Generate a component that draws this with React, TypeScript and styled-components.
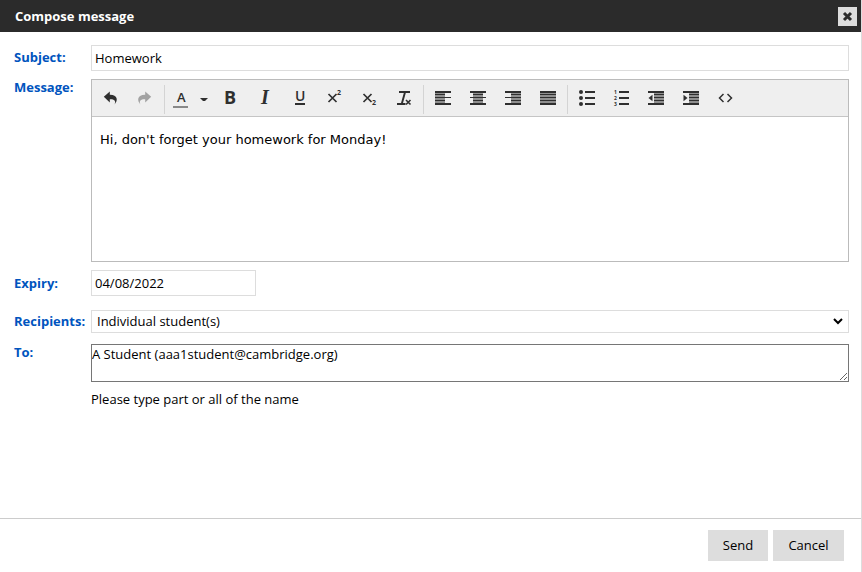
import React from "react";
import styled, { createGlobalStyle, css } from "styled-components";

const GlobalStyle = createGlobalStyle`
  *, *::before, *::after { box-sizing: border-box; }
  body {
    margin: 0;
    background: #fff;
    color: #000;
    font: 13px/18px "Open Sans", "Noto Sans", sans-serif;
  }
`;

const Dialog = styled.form`
  display: flex;
  flex-direction: column;
  min-height: 100vh;
  border-right: 1px solid #ddd;
`;

const Header = styled.header`
  display: flex;
  align-items: center;
  justify-content: space-between;
  height: 32px;
  padding: 0 4px 0 15px;
  background: #2b2b2b;
`;

const Title = styled.h1`
  margin: 0;
  color: #fff;
  font-size: 13px;
  font-weight: 700;
`;

const CloseButton = styled.button`
  display: grid;
  place-items: center;
  width: 19px;
  height: 19px;
  padding: 0;
  border: 0;
  background: #ddd;
`;

const Fields = styled.div`
  flex: 1;
  display: flex;
  flex-direction: column;
  padding: 13px 12px 0 14px;
`;

const Row = styled.div<{ $gap: number }>`
  display: grid;
  grid-template-columns: 77px minmax(0, 1fr);
  align-items: start;
  margin-bottom: ${(p) => p.$gap}px;
`;

const Label = styled.label<{ $top: number }>`
  padding-top: ${(p) => p.$top}px;
  color: #0054be;
  font-weight: 700;
  line-height: 16px;
  white-space: nowrap;
`;

const control = css`
  display: block;
  border: 1px solid #ddd;
  border-radius: 0;
  background: #fff;
  color: #000;
  font: inherit;
`;

const TextInput = styled.input<{ $width: string }>`
  ${control}
  width: ${(p) => p.$width};
  height: 26px;
  padding: 0 3px;
`;

const SelectWrap = styled.div`
  position: relative;
`;

const Select = styled.select`
  ${control}
  appearance: none;
  width: 100%;
  height: 23px;
  padding: 0 24px 2px 5px;
`;

const SelectArrow = styled.svg`
  position: absolute;
  right: 6px;
  top: 7px;
  pointer-events: none;
`;

const Recipients = styled.textarea`
  ${control}
  width: 100%;
  height: 38px;
  padding: 0;
  border-color: #767676;
  resize: vertical;
`;

const Hint = styled.p`
  margin: 8px 0 0;
`;

const Editor = styled.div`
  border: 1px solid #bbb;
`;

const Toolbar = styled.div`
  display: flex;
  height: 37px;
  padding: 5px 0 2px;
  border-bottom: 1px solid #c5c5c5;
  background: #efefef;
`;

const ToolGroup = styled.div<{ $width: number; $last?: boolean }>`
  display: flex;
  width: ${(p) => p.$width}px;
  padding: 0 2px;
  border-right: ${(p) => (p.$last ? 0 : "1px solid #d4d4d4")};
`;

const ToolButton = styled.button<{ $wide?: boolean }>`
  flex: ${(p) => (p.$wide ? "0 0 46px" : "1 1 0")};
  display: flex;
  align-items: center;
  justify-content: center;
  gap: 11px;
  min-width: 0;
  height: 26px;
  padding: 0;
  border: 0;
  background: none;
  color: #2f2f2f;

  &:disabled { color: #a2a2a2; }
`;

const Icon = styled.svg`
  display: block;
  flex: none;
  fill: currentColor;
  overflow: visible;
`;

const Message = styled.textarea`
  display: block;
  width: 100%;
  height: 144px;
  padding: 14px 8px;
  border: 0;
  background: #fff;
  color: #000;
  font: 13px/18px "DejaVu Sans", Verdana, sans-serif;
  resize: none;
`;

const Footer = styled.footer`
  display: flex;
  justify-content: flex-end;
  gap: 5px;
  padding: 11px 17px 11px;
  border-top: 1px solid #ccc;
`;

const ActionButton = styled.button<{ $minWidth: number }>`
  min-width: ${(p) => p.$minWidth}px;
  height: 31px;
  padding: 0 14px 2px;
  border: 0;
  background: #ddd;
  color: #000;
  font: inherit;
`;

type GlyphProps = { children: React.ReactNode; width?: number };
const Glyph = ({ children, width = 16 }: GlyphProps) => (
  <Icon width={width} height={16} viewBox={`0 0 ${width} 16`} aria-hidden="true">
    {children}
  </Icon>
);

const SANS = "Open Sans";
const SERIF = "Liberation Serif";

const rows = (shapes: [number, number][]) => (
  <Glyph>
    <rect x={shapes[1][0]} y="2" width={shapes[1][1]} height="12" opacity="0.5" />
    {shapes.map(([x, w], i) => (
      <rect key={i} x={x} y={[1, 4, 7, 10, 13][i]} width={w} height={i % 4 === 0 ? 2 : 1} />
    ))}
  </Glyph>
);

const indentRows = (
  <>
    <rect x="6" y="2" width="10" height="12" opacity="0.5" />
    <path d="M0 1h16v2H0zM6 4h10v1H6zM6 7h10v1H6zM6 10h10v1H6zM0 13h16v2H0z" />
  </>
);

const cross = (
  <path d="M2.500 4l8 8m0-8l-8 8" fill="none" stroke="currentColor" strokeWidth="1.700" />
);

const tools = {
  history: [
    {
      name: "Undo",
      icon: <Glyph><path d="M11.500 14.500c1.300-2.700 1.100-5.500-4.700-5.300v3.200L.8 6.800l6-5.300v3.200c7.500-.2 8.800 5.300 4.700 9.800z" /></Glyph>,
    },
    {
      name: "Redo",
      disabled: true,
      icon: <Glyph><path d="M3.500 14.500c-1.300-2.700-1.100-5.500 4.700-5.300v3.200l6-5.600-6-5.300v3.200C.7 4.500-.6 10 3.500 14.500z" /></Glyph>,
    },
  ],
  format: [
    { name: "Bold", icon: <Glyph><text x="2" y="14" fontFamily={SANS} fontSize="18" fontWeight="700">B</text></Glyph> },
    { name: "Italic", icon: <Glyph><text x="4" y="14" fontFamily={SERIF} fontSize="20" fontStyle="italic" fontWeight="700">I</text></Glyph> },
    {
      name: "Underline",
      icon: <Glyph><text x="3" y="11" fontFamily={SANS} fontSize="14" fontWeight="600">U</text><rect x="3" y="13" width="10" height="2" /></Glyph>,
    },
    {
      name: "Superscript",
      icon: <Glyph>{cross}<text x="11" y="5" fontFamily={SANS} fontSize="7" fontWeight="700">2</text></Glyph>,
    },
    {
      name: "Subscript",
      icon: <Glyph>{cross}<text x="11" y="15" fontFamily={SANS} fontSize="7" fontWeight="700">2</text></Glyph>,
    },
    {
      name: "Clear formatting",
      icon: <Glyph><path d="M3 1h11v2H9.800L7 13h2.500v2H1v-2h4L7.800 3H3z" /><path d="M10 10l4.500 4.500m0-4.500L10 14.500" stroke="currentColor" strokeWidth="1.600" /></Glyph>,
    },
  ],
  align: [
    { name: "Align left", icon: rows([[0, 16], [0, 10], [0, 16], [0, 10], [0, 16]]) },
    { name: "Align center", icon: rows([[0, 16], [3, 10], [0, 16], [3, 10], [0, 16]]) },
    { name: "Align right", icon: rows([[0, 16], [6, 10], [0, 16], [6, 10], [0, 16]]) },
    { name: "Justify", icon: rows([[0, 16], [0, 16], [0, 16], [0, 16], [0, 16]]) },
  ],
  blocks: [
    {
      name: "Bulleted list",
      icon: <Glyph><path d="M6 1h10v2H6zM6 7h10v2H6zM6 13h10v2H6z" /><circle cx="2" cy="2" r="2" /><circle cx="2" cy="8" r="2" /><circle cx="2" cy="14" r="2" /></Glyph>,
    },
    {
      name: "Numbered list",
      icon: (
        <Glyph>
          <path d="M5 1h10v2H5zM5 7h10v2H5zM5 13h10v2H5z" />
          <text x="0" y="4" fontFamily={SANS} fontSize="5" fontWeight="700">1</text>
          <text x="0" y="10" fontFamily={SANS} fontSize="5" fontWeight="700">2</text>
          <text x="0" y="16" fontFamily={SANS} fontSize="5" fontWeight="700">3</text>
        </Glyph>
      ),
    },
    { name: "Decrease indent", icon: <Glyph>{indentRows}<path d="M4.500 4.800v6.400L.5 8z" /></Glyph> },
    { name: "Increase indent", icon: <Glyph>{indentRows}<path d="M.5 4.800v6.400L4.500 8z" /></Glyph> },
    {
      name: "Source code",
      icon: <Glyph><path d="M5.500 4l-4 4 4 4M9.500 4l4 4-4 4" fill="none" stroke="currentColor" strokeWidth="1.500" /></Glyph>,
    },
  ],
};

type Tool = { name: string; icon: React.ReactNode; disabled?: boolean };
const Tools = ({ items }: { items: Tool[] }) => (
  <>
    {items.map((t) => (
      <ToolButton key={t.name} type="button" aria-label={t.name} disabled={t.disabled}>
        {t.icon}
      </ToolButton>
    ))}
  </>
);

export default function App() {
  return (
    <>
      <GlobalStyle />
      <Dialog onSubmit={(e) => e.preventDefault()}>
        <Header>
          <Title>Compose message</Title>
          <CloseButton type="button" aria-label="Close">
            <svg width="11" height="11" viewBox="0 0 11 11" aria-hidden="true">
              <path d="M2 2l7 7m0-7l-7 7" stroke="#2b2b2b" strokeWidth="3" />
            </svg>
          </CloseButton>
        </Header>
        <Fields>
          <Row $gap={8}>
            <Label htmlFor="subject" $top={4}>Subject:</Label>
            <TextInput id="subject" $width="100%" defaultValue="Homework" />
          </Row>
          <Row $gap={8}>
            <Label htmlFor="message" $top={0}>Message:</Label>
            <Editor>
              <Toolbar role="toolbar" aria-label="Formatting">
                <ToolGroup $width={73}><Tools items={tools.history} /></ToolGroup>
                <ToolGroup $width={259}>
                  <ToolButton $wide type="button" aria-label="Text color">
                    <Glyph>
                      <text x="4" y="12" fontFamily={SANS} fontSize="13" fontWeight="600">A</text>
                      <rect x="0" y="16" width="15" height="2" fill="#888" />
                    </Glyph>
                    <Glyph width={8}><path d="M0 8h8L5 11H3z" /></Glyph>
                  </ToolButton>
                  <Tools items={tools.format} />
                </ToolGroup>
                <ToolGroup $width={144}><Tools items={tools.align} /></ToolGroup>
                <ToolGroup $width={177} $last><Tools items={tools.blocks} /></ToolGroup>
              </Toolbar>
              <Message id="message" defaultValue="Hi, don't forget your homework for Monday!" />
            </Editor>
          </Row>
          <Row $gap={14}>
            <Label htmlFor="expiry" $top={5}>Expiry:</Label>
            <TextInput id="expiry" $width="165px" defaultValue="04/08/2022" />
          </Row>
          <Row $gap={11}>
            <Label htmlFor="recipients" $top={3}>Recipients:</Label>
            <SelectWrap>
              <Select id="recipients">
                <option>Individual student(s)</option>
              </Select>
              <SelectArrow width="10" height="8" viewBox="0 0 10 8" aria-hidden="true">
                <path d="M1 2l4 4 4-4" fill="none" stroke="#000" strokeWidth="2" />
              </SelectArrow>
            </SelectWrap>
          </Row>
          <Row $gap={16}>
            <Label htmlFor="to" $top={0}>To:</Label>
            <div>
              <Recipients id="to" defaultValue="A Student (aaa1student@cambridge.org)" />
              <Hint>Please type part or all of the name</Hint>
            </div>
          </Row>
        </Fields>
        <Footer>
          <ActionButton type="submit" $minWidth={60}>Send</ActionButton>
          <ActionButton type="button" $minWidth={71}>Cancel</ActionButton>
        </Footer>
      </Dialog>
    </>
  );
}
